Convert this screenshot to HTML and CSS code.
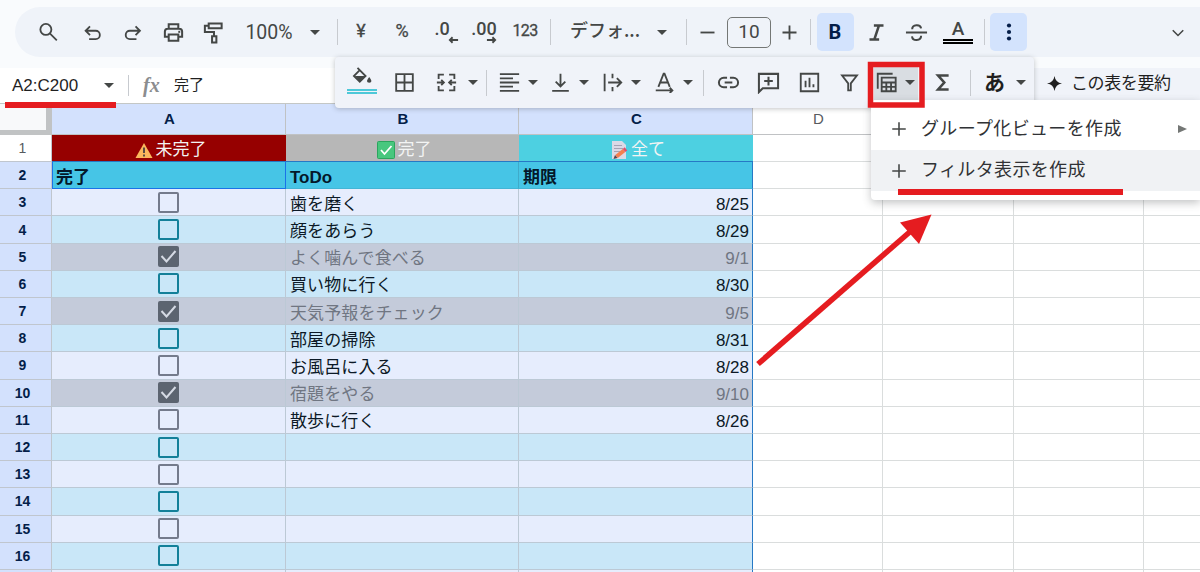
FILE: index.html
```html
<!DOCTYPE html>
<html lang="ja">
<head>
    <meta charset="UTF-8">
    <title>ToDo</title>
    <link rel="stylesheet" href="styles.css">
</head>
<body>
<div class="top">
    <div class="toolbar">
        <svg class="icon" viewBox="0 0 24 24"><circle cx="9" cy="8.500" r="6.300"/><path d="M13.500 13L21.500 21"/></svg>
        <svg class="icon" viewBox="0 0 24 24"><path d="M7 19.500h7.500a4.700 4.700 0 0 0 0-9.500H3.500M8 5L3 10L8 15"/></svg>
        <svg class="icon" viewBox="0 0 24 24"><path d="M16.500 19.500H9a4.700 4.700 0 0 1 0-9.500h11M15.500 5l5 5L15.500 15"/></svg>
        <svg class="icon wide" viewBox="0 0 24 24"><path d="M7 8V3.500h10V8M7 16.500H3V11q0-3 3-3h12q3 0 3 3v5.500h-4M7 14h10v6.500H7z"/><path d="M17 11.300h2"/></svg>
        <svg class="icon wide" viewBox="0 0 24 24"><path d="M7 2.500h13.500v5H7zM7 5H3v6.500h9.500V16M10.500 16h4.500v6.500h-4.500z"/></svg>
        <span class="zoom">100%</span>
        <i class="caret"></i>
        <i class="sep"></i>
        <span class="num">¥</span>
        <span class="num">%</span>
        <span class="dec">.0<svg viewBox="0 0 12 8"><path d="M11 4H2M5 1L2 4l3 3"/></svg></span>
        <span class="dec">.00<svg viewBox="0 0 12 8"><path d="M1 4h9M7 1l3 3l-3 3"/></svg></span>
        <span class="num small">123</span>
        <i class="sep"></i>
        <span class="font">デフォ...</span>
        <i class="caret"></i>
        <i class="sep"></i>
        <svg class="icon" viewBox="0 0 24 24"><path d="M4 12h16"/></svg>
        <span class="size">10</span>
        <svg class="icon" viewBox="0 0 24 24"><path d="M4 12h16M12 4v16"/></svg>
        <i class="sep"></i>
        <span class="btn bold">B</span>
        <svg class="icon heavy" viewBox="0 0 24 24"><path d="M9 4h11M4 20h11M14.800 4L9.500 20"/></svg>
        <svg class="icon wide" viewBox="0 0 24 24"><path d="M1 12h22M7.500 8.500c0-5 8.500-5.500 9.300-.8M7.300 16c.7 5.500 9.500 5 9.500-.5"/></svg>
        <span class="color">A</span>
        <i class="sep"></i>
        <span class="btn"><svg class="dots" viewBox="0 0 6 20"><circle cx="3" cy="3.500" r="2.100"/><circle cx="3" cy="10" r="2.100"/><circle cx="3" cy="16.500" r="2.100"/></svg></span>
        <svg class="icon chevron" viewBox="0 0 24 24"><path d="M5 9l7 7l7-7"/></svg>
    </div>
</div>

<div class="formula">
    <span class="name">A2:C200</span>
    <i class="caret"></i>
    <i class="sep"></i>
    <span class="fx">fx</span>
    <span class="value">完了</span>
    <div class="summary">
        <svg viewBox="0 0 16 16"><path d="M8 0Q9 7 16 8Q9 9 8 16Q7 9 0 8Q7 7 8 0z"/></svg>
        <span>この表を要約</span>
    </div>
</div>

<div class="sheet" id="sheet"></div>

<div class="more">
    <span class="fill"><svg viewBox="0 0 24 20"><path class="line" d="M7 1l9 9l-6.500 6.500L3 10l6.500-6.500"/><path d="M4 10h12l-6.500 6.500zM20 11q5 6 0 6.500q-5-.5 0-6.500z"/></svg></span>
    <svg class="icon" viewBox="0 0 24 24"><path d="M2.500 2.500h19v19h-19zM12 2.500v19M2.500 12h19"/></svg>
    <span class="drop merge"><svg class="icon" viewBox="0 0 24 24"><path d="M9 3H3v5M15 3h6v5M9 21H3v-5M15 21h6v-5M1 12h8M6 9l3 3l-3 3M23 12h-8M18 9l-3 3l3 3"/></svg><i class="caret"></i></span>
    <i class="sep"></i>
    <span class="drop"><svg class="icon" viewBox="0 0 24 24"><path d="M1 2.500h22M1 7.200h15M1 12h22M1 16.800h15M1 21.500h22"/></svg><i class="caret"></i></span>
    <span class="drop"><svg class="icon" viewBox="0 0 24 24"><path d="M12 2v14M6.500 11l5.500 5.500l5.500-5.500M2.500 21.500h19"/></svg><i class="caret"></i></span>
    <span class="drop"><svg class="icon" viewBox="0 0 24 24"><path d="M3 2v20M12 2v5M12 17v5M7 12h15M17 7l5 5l-5 5"/></svg><i class="caret"></i></span>
    <span class="drop"><svg class="icon" viewBox="0 0 24 24"><path d="M5 17l6-15h1l6 15M7.500 12h8M2 21h19M18 18l3 3l-3 3"/></svg><i class="caret"></i></span>
    <i class="sep"></i>
    <svg class="icon wide" viewBox="0 0 24 24"><path d="M10.500 7H7a5 5 0 0 0 0 10h3.500M13.500 7H17a5 5 0 0 1 0 10h-3.500M8 12h8"/></svg>
    <svg class="icon wide" viewBox="0 0 24 24"><path d="M2 22V3h20v15H6zM12 6v9M7.500 10.500h9"/></svg>
    <svg class="icon" viewBox="0 0 24 24"><path d="M2 2h20v20H2zM7.500 10v7.500M12 6.500v11M16.500 14v3.500"/></svg>
    <svg class="icon" viewBox="0 0 24 24"><path d="M3.500 4h17L13.500 13v8h-3v-8z"/></svg>
    <span class="drop view"><svg class="icon" viewBox="0 0 24 24"><path d="M2 19V2h17M6.500 6.500h16v15.500h-16zM6.500 12h16M6.500 17h16M11.800 12v10M17.200 12v10"/></svg><i class="caret"></i></span>
    <svg class="icon sum" viewBox="0 0 24 24"><path d="M19 4H7l7 8l-7 8h12"/></svg>
    <i class="sep"></i>
    <span class="drop kana"><b>あ</b><i class="caret"></i></span>
</div>

<div class="menu">
    <div class="item">
        <svg class="icon" viewBox="0 0 24 24"><path d="M3 12h18M12 3v18"/></svg>
        <span>グループ化ビューを作成</span>
        <i class="sub"></i>
    </div>
    <div class="item active">
        <svg class="icon" viewBox="0 0 24 24"><path d="M3 12h18M12 3v18"/></svg>
        <span>フィルタ表示を作成</span>
    </div>
</div>

<svg class="marks" viewBox="0 0 1200 572">
    <rect x="5" y="102" width="111" height="6"/>
    <rect x="898" y="189" width="225" height="6"/>
    <path class="frame" d="M870.500 64.500h51.500v40.500h-51.500z"/>
    <path class="shaft" d="M758 364L912 230"/>
    <path d="M931.500 214.500L900 222.500L919 244z"/>
</svg>

<script>
    var sheet = document.getElementById("sheet");

    // [done, todo, date]
    var todos = [
        [false, "歯を磨く", "8/25"],
        [false, "顔をあらう", "8/29"],
        [true, "よく噛んで食べる", "9/1"],
        [false, "買い物に行く", "8/30"],
        [true, "天気予報をチェック", "9/5"],
        [false, "部屋の掃除", "8/31"],
        [false, "お風呂に入る", "8/28"],
        [true, "宿題をやる", "9/10"],
        [false, "散歩に行く", "8/26"]
    ];

    var warn = '<svg class="emoji" viewBox="0 0 18 18"><path fill="#fbb75c" d="M9 2L17.500 17H.5z"/><path stroke="#594c45" stroke-width="2" d="M9 6.500v5.500M9 13.500v2"/></svg>';
    var check = '<svg class="emoji" viewBox="0 0 18 18"><rect x=".5" y=".5" width="17" height="17" rx="1" fill="#48c77e" stroke="#2ba55e"/><path fill="none" stroke="#fff" stroke-width="1.800" d="M4 9l3.500 4L14.500 5"/></svg>';
    var memo = '<svg class="emoji" viewBox="0 0 18 18"><path fill="#dcd9e6" d="M2 0h10l4 4v14H2z"/><path stroke="#a5a3b5" d="M4 4.500h8M4 7.500h9M4 10.500h6"/><path stroke="#f4804f" stroke-width="4" d="M6.500 15.500L14 9.500"/><path stroke="#e0506c" stroke-width="4" d="M14 9.500l2-1.600"/><path fill="#58444c" d="M3.500 18l1.500-4l2.500 3z"/></svg>';
    var tick = '<svg viewBox="0 0 21 21"><path d="M3.500 10l5 5.500L17.500 5"/></svg>';

    function row(cls, cells) {
        var html = '<div class="row ' + cls + '">';
        for (var i = 0; i < 8; i++) {
            html += '<div class="cell c' + i + '">' + (cells[i] || "") + '</div>';
        }
        return html + '</div>';
    }

    var html = row("head", ["", "A", "B", "C", "D"]);
    html += row("tabs", ["1", warn + "未完了", check + "完了", memo + "全て"]);
    html += row("title", ["2", "完了", "ToDo", "期限"]);
    for (var n = 3; n <= 16; n++) {
        var todo = todos[n - 3] || [false, "", ""];
        var cls = todo[0] ? "done" : (n % 2 ? "odd" : "even");
        html += row(cls, [n, '<span class="box">' + (todo[0] ? tick : "") + '</span>', todo[1], todo[2]]);
    }
    // sliver of the next row
    html += row("odd", []);
    sheet.innerHTML = html;
</script>
</body>
</html>
```
FILE: styles.css
```css
* {
    box-sizing: border-box;
}

body {
    margin: 0;
    width: 1200px;
    height: 572px;
    overflow: hidden;
    position: relative;
    background: #fff;
    color: #444746;
    font-family: "Liberation Sans", "Noto Sans CJK JP", sans-serif;
}

.top {
    height: 68px;
    padding: 7px 0 0 15px;
    background: #f9fbfd;
}

.toolbar {
    display: grid;
    grid-template-columns: 44px 46px 32px 50px 30px 82px 10px 34px 14px 68px 12px 72px 10px 41px 68px 46px 3px 38px 46px 34px 9px 40px 42px 38px 46px 6px 43px 1fr;
    align-items: center;
    justify-items: center;
    height: 50px;
    padding-left: 11px;
    border-radius: 25px 0 0 25px;
    background: #eff3f9;
}

.icon {
    display: block;
    width: 21px;
    height: 21px;
    fill: none;
    stroke: #444746;
    stroke-width: 2.1;
}

.icon.wide {
    width: 23px;
    height: 23px;
}

.icon.heavy {
    stroke-width: 2.8;
}

.icon.chevron {
    width: 18px;
    justify-self: end;
    margin-right: 13px;
}

.caret {
    border: 5.500px solid transparent;
    border-top-color: #444746;
    border-bottom: 0;
}

.sep {
    width: 1px;
    height: 26px;
    background: #c7cacf;
}

.zoom {
    font: 19.500px Roboto, sans-serif;
}

.num {
    font: 18px Roboto, sans-serif;
    margin-top: -3px;
    -webkit-text-stroke: 0.3px #444746;
}

.num.small {
    font-size: 16px;
    letter-spacing: -0.6px;
}

.dec {
    position: relative;
    font: 500 18px Roboto, sans-serif;
    margin-top: -7px;
}

.dec svg {
    position: absolute;
    right: -9px;
    bottom: -5px;
    width: 11px;
    height: 8px;
    fill: none;
    stroke: #444746;
    stroke-width: 2;
}

.dec + .dec svg {
    right: 0;
}

.font {
    font: 500 18px "Noto Sans CJK JP", sans-serif;
    white-space: nowrap;
    margin-top: -6px;
}

.size {
    width: 44px;
    height: 31px;
    border: 1px solid #747775;
    border-radius: 5px;
    font: 19px/28px Roboto, sans-serif;
    text-align: center;
}

.btn {
    display: flex;
    align-items: center;
    justify-content: center;
    width: 37px;
    height: 38px;
    border-radius: 5px;
    background: #d3e3fd;
    color: #041e49;
}

.btn.bold {
    font: bold 20px Roboto, sans-serif;
}

.dots {
    width: 6px;
    height: 20px;
    fill: #041e49;
}

.color {
    width: 30px;
    height: 24px;
    border-bottom: 5px double #000;
    font: 500 19px/18px Roboto, sans-serif;
    text-align: center;
}

.formula {
    display: flex;
    align-items: center;
    height: 36px;
    padding-left: 12px;
    border-bottom: 1px solid #c4c7c5;
    color: #1f1f1f;
}

.formula .name {
    width: 92px;
    font-size: 17px;
}

.formula .sep {
    height: 21px;
    margin: 0 14px;
}

.formula .fx {
    width: 31px;
    color: #8b8d8f;
    font: italic bold 20px "Liberation Serif", serif;
}

.formula .value {
    margin-top: -4px;
    font-size: 15px;
}

.summary {
    display: flex;
    align-items: center;
    width: 166px;
    height: 32px;
    margin: -4px 0 0 auto;
    padding-left: 13px;
    background: #f0f3f9;
    font-size: 17px;
    white-space: nowrap;
}

.summary svg {
    width: 15px;
    height: 15px;
    margin-right: 9px;
    fill: #1f1f1f;
}

.summary span {
    margin-top: -5px;
    letter-spacing: -0.4px;
}

/* sheet */
.sheet {
    height: 468px;
    overflow: hidden;
}

.row {
    display: grid;
    grid-template-columns: 52px 234px 233px 234px 130px 131px 130px 131px;
    grid-template-rows: 100%;
    height: 27.190px;
}

.cell {
    display: flex;
    align-items: center;
    border-right: 1px solid #dadddd;
    border-bottom: 1px solid #dadddd;
    color: #0c1926;
    font-size: 17px;
    line-height: 20px;
    white-space: nowrap;
}

.cell.c2 {
    padding-left: 4px;
}

.cell.c0 {
    justify-content: center;
    padding-right: 6px;
    border-color: #c0c6ce;
    background: #d3e1fd;
    color: #041e49;
    font-size: 14px;
    font-weight: bold;
}

.head {
    height: 30.900px;
}

.head .cell {
    justify-content: center;
    padding-left: 0;
    border-color: #c0c2c4;
    color: #575b5f;
    font-size: 15px;
}

.head .c0 {
    border-right: 6px solid #c1c3c4;
    border-bottom: 5px solid #c1c3c4;
    background: #f8f9fa;
}

.head .c1,
.head .c2,
.head .c3 {
    background: #d3e1fd;
    color: #041e49;
    font-weight: bold;
}

.head .c1,
.head .c2,
.head .c3,
.head .c4 {
    padding-left: 2px;
}

.tabs .c0 {
    background: #fff;
    color: #575b5f;
    font-weight: normal;
}

.tabs .c1,
.tabs .c2,
.tabs .c3 {
    justify-content: center;
    padding: 5px 0 0 3px;
    border-right: 0;
    border-bottom-color: #2679c5;
    color: #f3f4f4;
}

.tabs .c1 {
    background: #960000;
}

.tabs .c2 {
    background: #b7b7b7;
}

.tabs .c3 {
    background: #4dd0e1;
}

.emoji {
    width: 18px;
    height: 18px;
    margin-right: 3px;
}

.title .c1,
.title .c2,
.title .c3 {
    padding: 5px 0 0 4px;
    border-bottom-color: #43b5d6;
    border-right-color: #3fabca;
    background: #46c5e6;
    color: #04182a;
    font-weight: bold;
}

.title .c1 {
    border-right-color: #1a73e8;
    border-bottom-color: #1a73e8;
    box-shadow: inset 1px 0 #1a73e8;
}

.odd .c1, .odd .c2, .odd .c3 {
    background: #e6edfd;
}

.even .c1, .even .c2, .even .c3 {
    background: #c9e7f8;
}

.done .c1, .done .c2, .done .c3 {
    background: #c4cbda;
    color: #707682;
}

.odd .c1, .even .c1, .done .c1,
.odd .c2, .even .c2, .done .c2,
.odd .c3, .even .c3, .done .c3 {
    border-color: #bcc9d5;
}

.odd .c1, .even .c1, .done .c1 {
    justify-content: center;
}

.odd .c2, .even .c2, .done .c2 {
    padding-top: 5px;
    letter-spacing: 0.1px;
}

.odd .c3, .even .c3, .done .c3 {
    justify-content: flex-end;
    padding: 5px 3px 0 0;
}

.title .c3, .odd .c3, .even .c3, .done .c3 {
    border-right-color: #2679c5;
}

.box {
    width: 21px;
    height: 21px;
    border: 2px solid #747b8c;
    border-radius: 2px;
}

.even .box {
    border-color: #138099;
}

.done .box {
    border: 0;
    background: #5c6470;
}

.box svg {
    display: block;
    fill: none;
    stroke: #d5dae4;
    stroke-width: 2;
}

/* second toolbar, opened from the three dots */
.more {
    position: absolute;
    left: 335px;
    top: 57px;
    display: grid;
    grid-template-columns: 27px 58px 48px 11px 52px 51px 52px 53px 7px 42px 38px 45px 34px 59px 34px 22px 48px;
    align-items: center;
    justify-items: center;
    width: 699px;
    height: 51px;
    padding-left: 13px;
    border-radius: 4px;
    background: #f0f3f9;
    box-shadow: 0 1px 5px rgba(60, 64, 67, 0.3);
}

.fill {
    width: 30px;
    height: 26px;
    margin-top: -3px;
    border-bottom: 5px double #4dc8d8;
}

.fill svg {
    display: block;
    width: 22px;
    height: 18px;
    margin: -1px 0 0 4px;
    fill: #444746;
}

.fill .line {
    fill: none;
    stroke: #444746;
    stroke-width: 2;
}

.drop {
    display: flex;
    align-items: center;
    gap: 8px;
}

.merge {
    gap: 11px;
}

.view {
    gap: 8px;
    height: 35px;
    padding: 0 3px 0 2px;
    background: #d9dde2;
}

.icon.sum {
    stroke-width: 3;
}

.kana {
    gap: 11px;
    color: #1f1f1f;
    font-size: 21px;
    line-height: 24px;
}

.menu {
    position: absolute;
    left: 871px;
    top: 100px;
    width: 329px;
    height: 100px;
    padding-top: 8px;
    border-radius: 4px 0 0 4px;
    background: #fff;
    box-shadow: 0 3px 8px rgba(60, 64, 67, 0.3);
}

.item {
    display: flex;
    align-items: center;
    height: 42px;
    padding-left: 19px;
    color: #303235;
    font-size: 18px;
    line-height: 24px;
    letter-spacing: 0.35px;
}

.item.active {
    height: 41px;
    background: #f0f2f4;
}

.item span {
    margin-top: -1px;
}

.active span {
    margin-top: -2px;
}

.item .icon {
    width: 18px;
    height: 18px;
    margin-right: 13px;
}

.sub {
    margin-left: 56px;
    border: 4.500px solid transparent;
    border-left: 9px solid #747775;
    border-right: 0;
}

/* red marks drawn over the page */
.marks {
    position: absolute;
    left: 0;
    top: 0;
    width: 1200px;
    height: 572px;
    fill: #e51c20;
}

.marks .frame,
.marks .shaft {
    fill: none;
    stroke: #e51c20;
    stroke-width: 5.500;
}
```
